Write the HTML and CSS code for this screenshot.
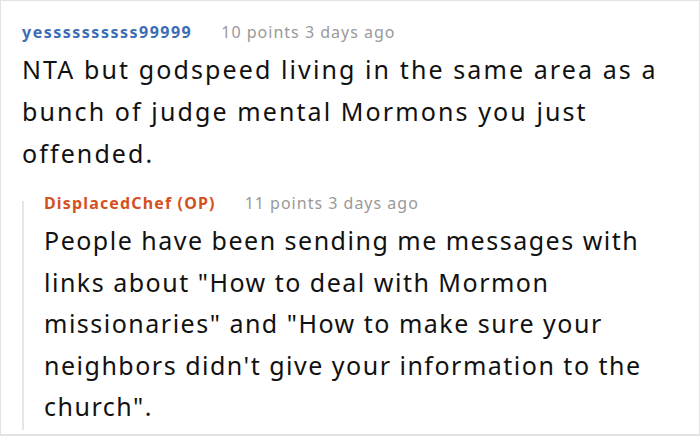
FILE: index.html
```html
<!DOCTYPE html>
<html lang="en">
<head>
    <meta charset="UTF-8">
    <meta name="viewport" content="width=device-width, initial-scale=1.0">
    <title>Comments</title>
    <link rel="stylesheet" href="styles.css">
</head>
<body>
    <div class="thread">
        <div class="comment">
            <div class="meta">
                <span class="author">yessssssssss99999</span>
                <span class="info">10 points 3 days ago</span>
            </div>
            <p class="text">NTA but godspeed living in the same area as a bunch of judge mental Mormons you just offended.</p>

            <div class="reply">
                <div class="meta">
                    <span class="author op">DisplacedChef (OP)</span>
                    <span class="info">11 points 3 days ago</span>
                </div>
                <p class="text">People have been sending me messages with links about "How to deal with Mormon missionaries" and "How to make sure your neighbors didn't give your information to the church".</p>
            </div>
        </div>
    </div>
</body>
</html>
```

FILE: styles.css
```css
body {
    margin: 0;
    font-family: "Noto Sans", "Open Sans", sans-serif;
    background: #ffffff;
    color: #111;
}

.thread {
    box-sizing: border-box;
    height: 436px;
    border: 1px solid #e3e3e3;
    border-bottom-width: 2px;
    padding: 19px 18px 0 21px;
    overflow: hidden;
}

.meta {
    display: flex;
    align-items: baseline;
    gap: 29px;
    font-size: 16px;
    line-height: 24px;
}

.author {
    font-weight: bold;
    color: #3a6db5;
    letter-spacing: 1.5px;
}

.author.op {
    color: #d4501f;
    letter-spacing: 1.15px;
}

.info {
    color: #999;
    letter-spacing: 1px;
}

.text {
    margin: 4px 0 0;
    font-size: 25px;
    line-height: 42px;
    letter-spacing: 2.1px;
}

.reply {
    position: relative;
    margin-top: 17px;
    padding-left: 22px;
}

.reply::before {
    content: "";
    position: absolute;
    left: 0;
    top: 10px;
    bottom: -2px;
    width: 2px;
    background: #e6e6e6;
}

.reply .text {
    margin-top: 5px;
    line-height: 41.5px;
    letter-spacing: 1.5px;
}
```
